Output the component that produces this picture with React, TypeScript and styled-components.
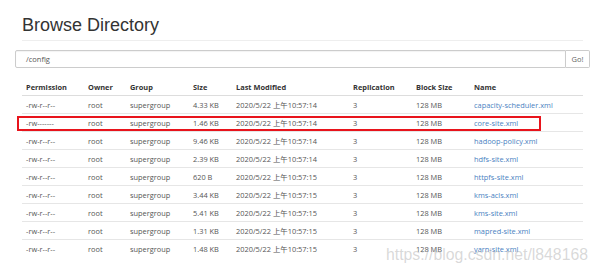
import React from 'react'
import styled, { createGlobalStyle } from 'styled-components'

const GlobalStyle = createGlobalStyle`
  html, body {
    margin: 0;
    padding: 0;
    background: #fff;
  }
  body {
    font-family: "Open Sans", "Noto Sans CJK SC", sans-serif;
    color: #555;
    overflow: hidden;
  }
`

const STPage = styled.div`
  position: relative;
  width: 597px;
  height: 275px;
`

const STContainer = styled.div`
  margin-left: 22px;
  width: 561px;
`

const STTitle = styled.h1`
  margin: 0;
  padding-top: 15px;
  font-family: "Liberation Sans", Arial, sans-serif;
  font-size: 18px;
  font-weight: 400;
  line-height: 20px;
  color: #333;
`

const STRule = styled.div`
  margin-top: 5px;
  border-top: 1px solid #eee;
`

const STInputGroup = styled.div`
  display: flex;
  margin: 9px -7px 0 -7px;
  height: 18px;
`

const STInput = styled.div`
  flex: 1;
  display: flex;
  align-items: center;
  padding: 0 10px;
  border: 1px solid #ccc;
  border-radius: 2px 0 0 2px;
  font-size: 7.5px;
  color: #555;
  box-shadow: inset 0 1px 1px rgba(0, 0, 0, 0.05);
`

const STButton = styled.div`
  width: 23px;
  display: flex;
  align-items: center;
  justify-content: center;
  border: 1px solid #ccc;
  border-left: none;
  border-radius: 0 2px 2px 0;
  font-size: 7.5px;
  color: #666;
`

const STTableWrap = styled.div`
  position: relative;
  margin-top: 10px;
`

const STTable = styled.table`
  width: 561px;
  table-layout: fixed;
  border-collapse: collapse;
  font-size: 7.4px;
`

const STHeadCell = styled.th`
  text-align: left;
  font-weight: 700;
  color: #333;
  height: 17px;
  padding: 0 4px;
  border-bottom: 1px solid #ddd;
  white-space: nowrap;
`

const STRow = styled.tr`
  & + & td {
    border-top: 1px solid #e6e6e6;
  }
`

const STCell = styled.td<{ $link?: boolean }>`
  height: 17px;
  padding: 0 4px;
  white-space: nowrap;
  color: ${p => (p.$link ? '#4a7fc1' : '#555')};
`

const STHighlight = styled.div`
  position: absolute;
  left: -5px;
  top: 38px;
  width: 520px;
  height: 11px;
  border: 2px solid #e8141c;
`

const STWatermark = styled.div`
  position: absolute;
  left: 386px;
  top: 247px;
  font-family: "Liberation Sans", Arial, sans-serif;
  font-size: 15.8px;
  line-height: 1;
  color: rgba(170, 170, 170, 0.45);
  white-space: nowrap;
`

const widths = [62, 42, 63, 43, 117, 63, 58, 113]
const heads = ['Permission', 'Owner', 'Group', 'Size', 'Last Modified', 'Replication', 'Block Size', 'Name']

const files = [
  { perm: '-rw-r--r--', size: '4.33 KB', time: '10:57:14', name: 'capacity-scheduler.xml' },
  { perm: '-rw-------', size: '1.46 KB', time: '10:57:14', name: 'core-site.xml' },
  { perm: '-rw-r--r--', size: '9.46 KB', time: '10:57:14', name: 'hadoop-policy.xml' },
  { perm: '-rw-r--r--', size: '2.39 KB', time: '10:57:14', name: 'hdfs-site.xml' },
  { perm: '-rw-r--r--', size: '620 B', time: '10:57:15', name: 'httpfs-site.xml' },
  { perm: '-rw-r--r--', size: '3.44 KB', time: '10:57:15', name: 'kms-acls.xml' },
  { perm: '-rw-r--r--', size: '5.41 KB', time: '10:57:15', name: 'kms-site.xml' },
  { perm: '-rw-r--r--', size: '1.31 KB', time: '10:57:15', name: 'mapred-site.xml' },
  { perm: '-rw-r--r--', size: '1.48 KB', time: '10:57:15', name: 'yarn-site.xml' },
]

export default function App(): JSX.Element {
  return (
    <STPage>
      <GlobalStyle />
      <STContainer>
        <STTitle>Browse Directory</STTitle>
        <STRule />
        <STInputGroup>
          <STInput>/config</STInput>
          <STButton>Go!</STButton>
        </STInputGroup>
        <STTableWrap>
          <STTable>
            <colgroup>
              {widths.map((w, i) => <col key={i} style={{ width: w }} />)}
            </colgroup>
            <thead>
              <tr>
                {heads.map(h => <STHeadCell key={h}>{h}</STHeadCell>)}
              </tr>
            </thead>
            <tbody>
              {files.map(f => (
                <STRow key={f.name}>
                  <STCell>{f.perm}</STCell>
                  <STCell>root</STCell>
                  <STCell>supergroup</STCell>
                  <STCell>{f.size}</STCell>
                  <STCell>2020/5/22 上午{f.time}</STCell>
                  <STCell>3</STCell>
                  <STCell>128 MB</STCell>
                  <STCell $link>{f.name}</STCell>
                </STRow>
              ))}
            </tbody>
          </STTable>
          <STHighlight />
        </STTableWrap>
      </STContainer>
      <STWatermark>https://blog.csdn.net/l848168</STWatermark>
    </STPage>
  )
}
